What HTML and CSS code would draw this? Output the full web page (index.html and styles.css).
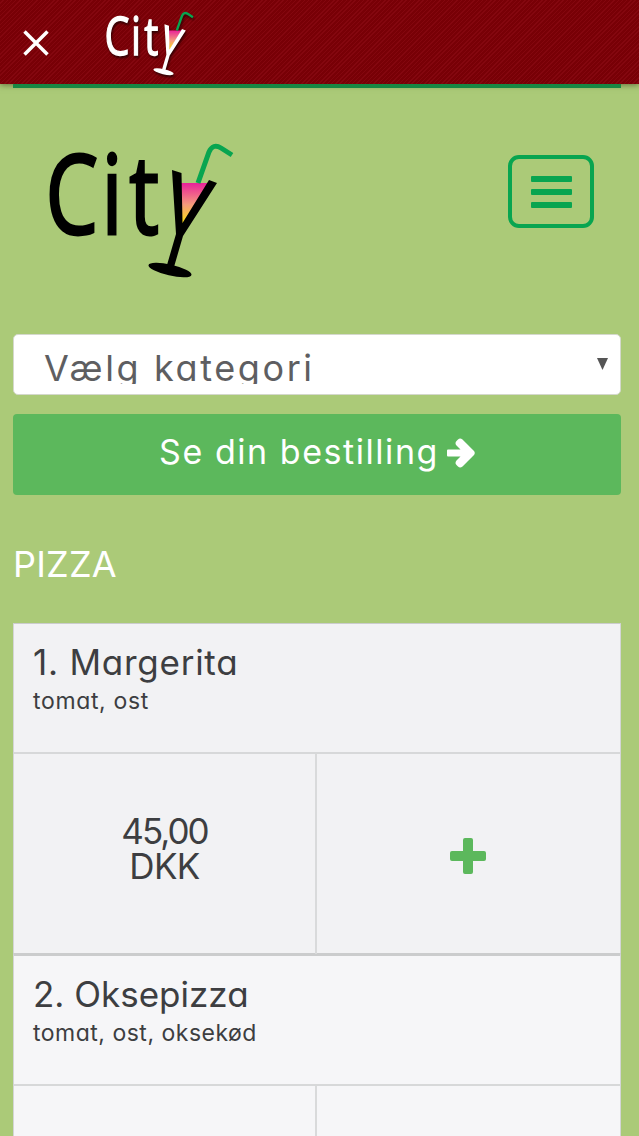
FILE: index.html
```html
<!DOCTYPE html>
<html lang="da">
<head>
<meta charset="utf-8">
<title>City</title>
<link rel="stylesheet" href="styles.css">
</head>
<body>
<svg class="defs" width="0" height="0" aria-hidden="true">
  <defs>
    <linearGradient id="drink" x1="0" y1="0" x2="0" y2="1">
      <stop offset="0" stop-color="#e9219a"/>
      <stop offset=".5" stop-color="#f59a7c"/>
      <stop offset="1" stop-color="#ffec00"/>
    </linearGradient>
    <symbol id="city-logo" viewBox="49 142 185 137">
      <text class="logo-text" transform="scale(.76 1)" x="60 133.5 170" y="234">Cit</text>
      <path d="M181 183H208L182 226Z" fill="url(#drink)"/>
      <path d="M172 170L181.500 173L182.500 223L209 180L217 183L183 236L174 267L167 265L176 234Z" fill="currentColor"/>
      <ellipse cx="170" cy="270" rx="22" ry="5.500" transform="rotate(13 170 270)" fill="currentColor"/>
      <path d="M198 183L209 152Q213 143 221 148L232 155" fill="none" stroke="#08a550" stroke-width="5"/>
    </symbol>
  </defs>
</svg>
<header class="topbar">
  <svg class="close" viewBox="0 0 26 26"><path d="M1.500 1.500L24.500 24.500M24.500 1.500L1.500 24.500"/></svg>
  <svg class="logo-small"><use href="#city-logo"/></svg>
</header>
<main class="page">
  <nav class="nav">
    <svg class="logo"><use href="#city-logo"/></svg>
    <button class="menu" aria-label="Menu"><i></i><i></i><i></i></button>
  </nav>
  <div class="select"><span class="select-text">Vælg kategori</span><i class="caret"></i></div>
  <div class="order"><span class="order-text">Se din bestilling</span>
    <svg class="arrow" viewBox="0 0 28 30"><path d="M1 11.500H13.500L9.500 7.500Q7.500 5 9.500 3L11 1.500Q13 -.5 15.500 1.500L27 13Q28.500 15 27 17L15.500 28.500Q13 30.500 11 28.500L9.500 27Q7.500 25 9.500 22.500L13.500 18.500H1Q0 18.500 0 17.500V12.500Q0 11.500 1 11.500Z"/></svg>
  </div>
  <h1 class="category"><span>PIZZA</span></h1>
  <section class="item">
    <div class="info"><h2 class="name n1">1. Margerita</h2><p class="desc d1">tomat, ost</p></div>
    <div class="actions">
      <div class="price"><span class="amount">45,00</span><span class="currency">DKK</span></div>
      <div class="add"><svg class="plus" viewBox="0 0 36 36"><path d="M15 0H21Q23 0 23 2V13H34Q36 13 36 15V21Q36 23 34 23H23V34Q23 36 21 36H15Q13 36 13 34V23H2Q0 23 0 21V15Q0 13 2 13H13V2Q13 0 15 0Z"/></svg></div>
    </div>
  </section>
  <section class="item alt">
    <div class="info"><h2 class="name n2">2. Oksepizza</h2><p class="desc d2">tomat, ost, oksekød</p></div>
    <div class="actions"><div class="price"></div><div class="add"></div></div>
  </section>
</main>
</body>
</html>
```
FILE: styles.css
```css
* { box-sizing: border-box; }
body {
  margin: 0;
  height: 1136px;
  overflow: hidden;
  background: #abca78;
  color: #3d3e41;
  font-family: Inter, "Open Sans", sans-serif;
  font-feature-settings: "cv11";
}
h1, h2, p { margin: 0; font-weight: 400; }
.defs { display: block; }
.logo-text { font: 400 110px "Open Sans", sans-serif; fill: currentColor; stroke: currentColor; stroke-width: 2.8px; }
.topbar {
  height: 84px;
  display: flex;
  align-items: flex-start;
  padding-left: 23px;
  background: repeating-linear-gradient(135deg, #780006 0 2px, #84070f 2px 3px);
  box-shadow: 0 1px 6px rgba(50, 50, 20, .6);
}
.close { width: 26px; height: 26px; margin-top: 30px; fill: none; stroke: #fff; stroke-width: 3.500; }
.logo-small { width: 88px; height: 65px; margin: 11px 0 0 57px; color: #fff; filter: drop-shadow(1px 2px 1px rgba(0, 0, 0, .6)); }
.page { height: 1052px; overflow: hidden; padding: 0 18px 0 13px; }
.nav {
  height: 250px;
  border-top: 4px solid #178743;
  display: flex;
  justify-content: space-between;
  align-items: flex-start;
  padding: 54px 27px 0 36px;
}
.logo { width: 185px; height: 137px; color: #000; }
.menu {
  width: 86px;
  height: 73px;
  margin-top: 13px;
  padding: 0;
  border: 4px solid #08a550;
  border-radius: 11px;
  background: none;
  display: flex;
  flex-direction: column;
  align-items: center;
  justify-content: center;
  gap: 7px;
}
.menu i { width: 41px; height: 6px; border-radius: 1px; background: #08a550; }
.select {
  height: 61px;
  display: flex;
  justify-content: space-between;
  padding: 11px 12px 0 30px;
  border: 1px solid #d4d8cc;
  border-radius: 5px;
  background: #fff;
  color: #5e5e61;
}
.select-text { height: 38px; overflow: hidden; font-size: 36px; font-weight: 400; line-height: 44px; letter-spacing: 2.6px; white-space: nowrap; }
.caret { margin-top: 12px; width: 11px; height: 12px; background: #555; clip-path: polygon(0 0, 100% 0, 50% 100%); }
.order {
  height: 81px;
  margin-top: 19px;
  display: flex;
  justify-content: center;
  padding: 17px 0 0;
  gap: 8px;
  border-radius: 4px;
  background: #5cb85c;
  color: #fff;
}
.order-text { font-size: 34px; line-height: 42px; letter-spacing: 1.55px; white-space: nowrap; }
.arrow { width: 28px; height: 30px; margin-top: 7px; fill: #fff; }
.category { height: 128px; padding-top: 47px; color: #fff; font-size: 36px; line-height: 44px; letter-spacing: .2px; }
.item { border: 2px solid #d4d5d6; border-width: 1px 1px 0; border-top-color: #cbcccd; background: #f2f2f4; height: 330px; }
.item.alt { background: #f6f6f8; border-top-width: 3px; }
.info { height: 130px; padding: 17px 19px 0; border-bottom: 2px solid #d7d8d9; white-space: nowrap; }
.name { font-size: 35px; line-height: 42px; }
.n1 { letter-spacing: .75px; }
.n2 { letter-spacing: 0; }
.desc { font-size: 23px; line-height: 37px; }
.d1 { letter-spacing: .65px; }
.d2 { letter-spacing: .5px; }
.actions { display: flex; height: 200px; }
.price { width: 303px; border-right: 2px solid #d9dadb; display: flex; flex-direction: column; align-items: center; padding-top: 60px; font-size: 35px; line-height: 35px; }
.amount { letter-spacing: -2px; }
.currency { letter-spacing: -.6px; }
.add { flex: 1; display: flex; justify-content: center; padding: 84px 2px 0 0; }
.plus { width: 36px; height: 36px; fill: #5cb85c; }
```
